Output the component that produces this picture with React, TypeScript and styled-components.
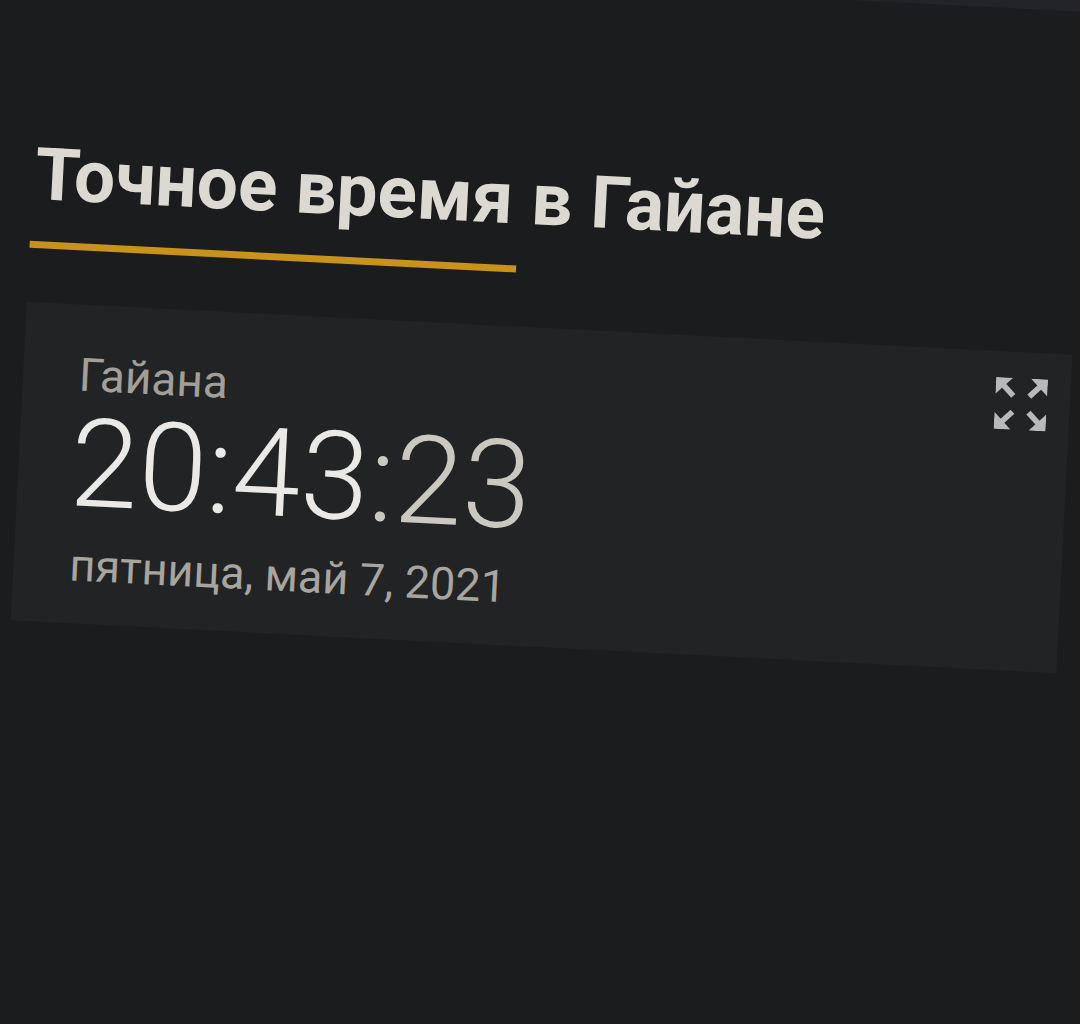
import React from 'react';
import styled, { createGlobalStyle } from 'styled-components';

const GlobalStyle = createGlobalStyle`
    html, body {
        margin: 0;
        padding: 0;
        width: 1080px;
        height: 1024px;
        overflow: hidden;
        background: #1b1c1e;
        font-family: Roboto, "Noto Sans", "Liberation Sans", sans-serif;
    }
`;

const Page = styled.div`
    width: 1160px;
    min-height: 1200px;
    background: #1b1c1e;
    transform-origin: 0 0;
    transform: rotate(2.9deg) translateY(-100px);
    display: flex;
    flex-direction: column;
`;

const TopBar = styled.div`
    height: 57px;
    background: #232427;
`;

const Content = styled.section`
    display: flex;
    flex-direction: column;
    align-items: flex-start;
    padding: 179px 0 0 42px;
`;

const Title = styled.h1`
    margin: 0;
    padding-left: 2px;
    font-size: 73px;
    line-height: 72px;
    font-weight: 700;
    color: #dcd8d2;
    white-space: nowrap;
`;

const Underline = styled.div`
    width: 487px;
    height: 7px;
    margin-top: 31px;
    background: #c8921b;
`;

const Card = styled.div`
    width: 1047px;
    height: 319px;
    box-sizing: border-box;
    margin-top: 54px;
    padding: 26px 23px 0 56px;
    background: #222325;
    display: flex;
    justify-content: space-between;
    align-items: flex-start;
`;

const Info = styled.div`
    display: flex;
    flex-direction: column;
    margin-top: 17px;
`;

const City = styled.div`
    font-size: 46px;
    line-height: 54px;
    font-weight: 400;
    color: #a29e98;
`;

const Clock = styled.div`
    font-size: 123px;
    line-height: 124px;
    font-weight: 300;
    color: #ebe9e5;
    margin-left: -4px;
    white-space: nowrap;
`;

const Seconds = styled.span`
    color: #cbc7c1;
`;

const DateLine = styled.div`
    margin-top: 14px;
    font-size: 45px;
    line-height: 52px;
    font-weight: 400;
    color: #a8a49e;
    white-space: nowrap;
`;

const FullscreenButton = styled.button`
    width: 52px;
    height: 52px;
    padding: 0;
    border: none;
    background: transparent;
    color: #b9b9b9;
    cursor: pointer;

    svg {
        display: block;
    }
`;

const Arrow = ({ turn }: { turn: number }) => (
    <g transform={`rotate(${turn} 26 26)`}>
        <polygon points="0,0 17,0 0,17" />
        <polygon points="10,6 20,16 16,20 6,10" />
    </g>
);

const ExpandIcon = () => (
    <svg width="52" height="52" viewBox="0 0 52 52" fill="currentColor">
        <Arrow turn={0} />
        <Arrow turn={90} />
        <Arrow turn={180} />
        <Arrow turn={270} />
    </svg>
);

const App = () => (
    <>
        <GlobalStyle />
        <Page>
            <TopBar />
            <Content>
                <Title>Точное время в Гайане</Title>
                <Underline />
                <Card>
                    <Info>
                        <City>Гайана</City>
                        <Clock>
                            20:43<Seconds>:23</Seconds>
                        </Clock>
                        <DateLine>пятница, май 7, 2021</DateLine>
                    </Info>
                    <FullscreenButton aria-label="fullscreen">
                        <ExpandIcon />
                    </FullscreenButton>
                </Card>
            </Content>
        </Page>
    </>
);

export default App;
